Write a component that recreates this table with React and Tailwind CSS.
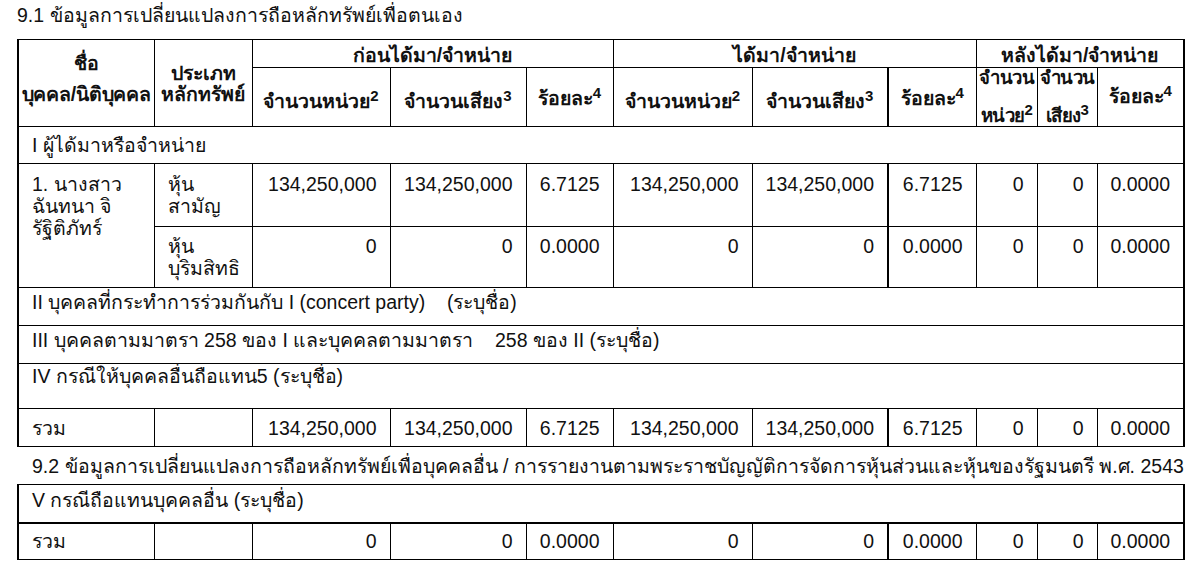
import React from "react";

function Sup({ children }) {
  return <span className="relative -top-[7px] text-[15px] leading-none align-baseline">{children}</span>;
}

function Colgroup() {
  return (
    <colgroup>
      <col className="w-[136px]" />
      <col className="w-[98px]" />
      <col className="w-[138px]" />
      <col className="w-[136px]" />
      <col className="w-[87px]" />
      <col className="w-[139px]" />
      <col className="w-[136px]" />
      <col className="w-[88px]" />
      <col className="w-[61px]" />
      <col className="w-[60px]" />
      <col className="w-[87px]" />
    </colgroup>
  );
}

const td = "border border-black p-0";
const num = "border border-black p-0 pr-[13px] text-right whitespace-nowrap";

export default function App() {
  const full = ["134,250,000", "134,250,000", "6.7125", "134,250,000", "134,250,000", "6.7125", "0", "0", "0.0000"];
  const zero = ["0", "0", "0.0000", "0", "0", "0.0000", "0", "0", "0.0000"];
  return (
    <div className="w-[1200px] h-[580px] bg-white text-[#111] font-['Liberation_Sans',sans-serif] text-[19.5px] leading-[22px] overflow-hidden">
      <div className="pl-[17px] pt-[3px] text-[19.5px] leading-[24px] whitespace-nowrap">
        9.1 ข้อมูลการเปลี่ยนแปลงการถือหลักทรัพย์เพื่อตนเอง
      </div>
      <table className="ml-[17px] mt-[12px] table-fixed border-collapse w-[1168px] border-l-2 border-r-2 border-black">
        <Colgroup />
        <thead>
          <tr className="h-[28px]">
            <th rowSpan={2} className={`${td} border-l-2 align-top font-bold text-center`}>
              <div className="pt-[12px] whitespace-nowrap">
                <div>ชื่อ</div>
                <div className="mt-[9px] tracking-[-0.2px]">บุคคล/นิติบุคคล</div>
              </div>
            </th>
            <th rowSpan={2} className={`${td} align-top font-bold text-center`}>
              <div className="pt-[23px] leading-[21px] whitespace-nowrap">
                <div>ประเภท</div>
                <div>หลักทรัพย์</div>
              </div>
            </th>
            <th colSpan={3} className={`${td} align-top font-bold text-center`}>
              <div className="pt-[4px]">ก่อนได้มา/จำหน่าย</div>
            </th>
            <th colSpan={3} className={`${td} align-top font-bold text-center`}>
              <div className="pt-[4px]">ได้มา/จำหน่าย</div>
            </th>
            <th colSpan={3} className={`${td} align-top font-bold text-center`}>
              <div className="pt-[4px]">หลังได้มา/จำหน่าย</div>
            </th>
          </tr>
          <tr className="h-[59px]">
            {[
              ["จำนวนหน่วย", "2"],
              ["จำนวนเสียง", "3"],
              ["ร้อยละ", "4"],
              ["จำนวนหน่วย", "2"],
              ["จำนวนเสียง", "3"],
              ["ร้อยละ", "4"],
            ].map(([t, s], i) => (
              <th key={i} className={`${td} ${i === 5 ? "border-l-2" : ""} align-top font-bold text-center whitespace-nowrap`}>
                <div className={i === 2 || i === 5 ? "pt-[19px]" : "pt-[22px]"}>
                  {t}
                  <Sup>{s}</Sup>
                </div>
              </th>
            ))}
            <th className={`${td} align-top font-bold text-center whitespace-nowrap`}>
              <div className="leading-[20px] text-[18.5px] tracking-[-0.5px]">
                <div>จำนวน</div>
                <div className="mt-[18px]">
                  หน่วย<Sup>2</Sup>
                </div>
              </div>
            </th>
            <th className={`${td} align-top font-bold text-center whitespace-nowrap`}>
              <div className="leading-[20px] text-[18.5px] tracking-[-0.5px]">
                <div>จำนวน</div>
                <div className="mt-[18px]">
                  เสียง<Sup>3</Sup>
                </div>
              </div>
            </th>
            <th className={`${td} align-top font-bold text-center whitespace-nowrap`}>
              <div className="pt-[17px]">
                ร้อยละ<Sup>4</Sup>
              </div>
            </th>
          </tr>
        </thead>
        <tbody>
          <tr className="h-[37px]">
            <td colSpan={11} className={`${td} border-l-2 pl-[13px] align-middle`}>
              I ผู้ได้มาหรือจำหน่าย
            </td>
          </tr>
          <tr className="h-[63px] align-top">
            <td rowSpan={2} className={`${td} border-l-2 pl-[13px] pt-[9px] align-top`}>
              <div>1. นางสาว</div>
              <div>ฉันทนา จิ</div>
              <div>รัฐิติภัทร์</div>
            </td>
            <td className={`${td} pl-[13px] pt-[9px] align-top`}>
              <div>หุ้น</div>
              <div>สามัญ</div>
            </td>
            {full.map((v, i) => (
              <td key={i} className={`${num} pt-[9px] align-top ${i === 5 ? "border-l-2" : ""}`}>
                {v}
              </td>
            ))}
          </tr>
          <tr className="h-[61px] align-top">
            <td className={`${td} pl-[13px] pt-[8px] align-top`}>
              <div>หุ้น</div>
              <div>บุริมสิทธิ</div>
            </td>
            {zero.map((v, i) => (
              <td key={i} className={`${num} pt-[8px] align-top ${i === 5 ? "border-l-2" : ""}`}>
                {v}
              </td>
            ))}
          </tr>
          <tr className="h-[38px]">
            <td colSpan={11} className={`${td} border-l-2 pl-[13px] pt-[3px] align-top whitespace-nowrap`}>
              II บุคคลที่กระทำการร่วมกันกับ I (concert party)&nbsp;&nbsp;&nbsp; (ระบุชื่อ)
            </td>
          </tr>
          <tr className="h-[38px]">
            <td colSpan={11} className={`${td} border-l-2 pl-[13px] pt-[3px] align-top whitespace-nowrap`}>
              III บุคคลตามมาตรา 258 ของ I และบุคคลตามมาตรา&nbsp;&nbsp;&nbsp; 258 ของ II (ระบุชื่อ)
            </td>
          </tr>
          <tr className="h-[45px]">
            <td colSpan={11} className={`${td} border-l-2 pl-[13px] align-top pt-[1px] whitespace-nowrap`}>
              IV กรณีให้บุคคลอื่นถือแทน5 (ระบุชื่อ)
            </td>
          </tr>
          <tr className="h-[38px]">
            <td className={`${td} border-l-2 pl-[13px] align-middle`}>รวม</td>
            <td className={td}></td>
            {full.map((v, i) => (
              <td key={i} className={`${num} align-middle ${i === 5 ? "border-l-2" : ""}`}>
                {v}
              </td>
            ))}
          </tr>
        </tbody>
      </table>
      <div className="pl-[32px] mt-[6px] text-[19.5px] leading-[26px] whitespace-nowrap">
        9.2 ข้อมูลการเปลี่ยนแปลงการถือหลักทรัพย์เพื่อบุคคลอื่น / การรายงานตามพระราชบัญญัติการจัดการหุ้นส่วนและหุ้นของรัฐมนตรี พ.ศ. 2543
      </div>
      <table className="ml-[17px] mt-[5px] table-fixed border-collapse w-[1168px] border-l-2 border-r-2 border-black">
        <Colgroup />
        <tbody>
          <tr className="h-[38px]">
            <td colSpan={11} className={`${td} border-l-2 border-b-2 pl-[13px] pt-[4px] align-top`}>
              V กรณีถือแทนบุคคลอื่น (ระบุชื่อ)
            </td>
          </tr>
          <tr className="h-[37px]">
            <td className={`${td} border-l-2 pl-[13px] align-middle`}>รวม</td>
            <td className={td}></td>
            {zero.map((v, i) => (
              <td key={i} className={`${num} align-middle ${i === 5 ? "border-l-2" : ""}`}>
                {v}
              </td>
            ))}
          </tr>
        </tbody>
      </table>
    </div>
  );
}
